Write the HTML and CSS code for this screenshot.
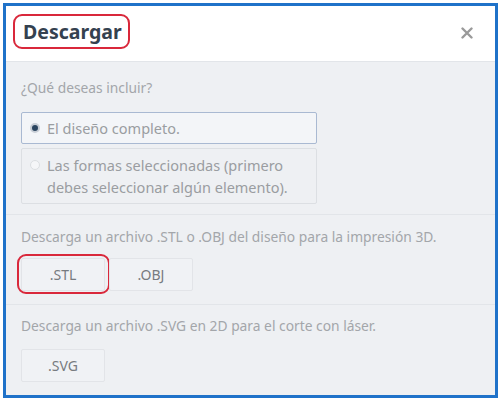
FILE: index.html
```html
<!DOCTYPE html>
<html lang="es">
<head>
<meta charset="utf-8">
<link rel="stylesheet" href="styles.css">
</head>
<body>
<div class="frame">
  <div class="header">
    <h1 class="title">Descargar</h1>
    <svg class="close" width="12" height="12" viewBox="0 0 12 12"><path d="M1.5 1.5L10.5 10.5M10.5 1.5L1.5 10.5" stroke="#9a9a9a" stroke-width="2.4" stroke-linecap="round"/></svg>
  </div>
  <div class="section s1">
    <p class="label">¿Qué deseas incluir?</p>
    <div class="options">
      <div class="option selected"><span class="radio on"></span><span>El diseño completo.</span></div>
      <div class="option"><span class="radio"></span><span>Las formas seleccionadas (primero<br>debes seleccionar algún elemento).</span></div>
    </div>
  </div>
  <div class="section s2">
    <p class="label">Descarga un archivo .STL o .OBJ del diseño para la impresión 3D.</p>
    <div class="buttons">
      <div class="btn highlight">.STL</div>
      <div class="btn">.OBJ</div>
    </div>
  </div>
  <div class="section s3">
    <p class="label">Descarga un archivo .SVG en 2D para el corte con láser.</p>
    <div class="buttons">
      <div class="btn">.SVG</div>
    </div>
  </div>
</div>
</body>
</html>
```
FILE: styles.css
```css
html, body { margin: 0; padding: 0; background: #fff; }
body { font-family: "Noto Sans", "Open Sans", sans-serif; }
.frame {
  margin: 3px 2px 0 3px;
  height: 389px;
  border: 3px solid #1f72c9;
  background: #eef0f3;
  display: flex;
  flex-direction: column;
}
.header {
  height: 55px;
  background: #fff;
  border-bottom: 1px solid #e2e5e9;
  display: flex;
  align-items: flex-start;
  justify-content: space-between;
  padding: 0 22px 0 7px;
}
.title {
  margin: 8px 0 0 0;
  border: 2px solid #d9283b;
  border-radius: 9px;
  padding: 0 6px 0 8px;
  height: 31px;
  line-height: 31px;
  font-size: 19.5px;
  font-weight: 700;
  color: #34414f;
}
.close { margin-top: 21px; }
.section { padding: 0 17px 0 15px; border-bottom: 1px solid #e2e5e9; }
.s1 { padding-top: 16px; height: 136px; }
.s2 { padding-top: 12px; height: 77px; }
.s3 { padding-top: 11px; border-bottom: none; flex: 1; }
.label {
  margin: 0;
  font-size: 13.8px;
  line-height: 19px;
  color: #a3a6aa;
}
.options { margin-top: 15px; display: flex; flex-direction: column; gap: 4px; width: 296px; }
.option {
  display: flex;
  align-items: flex-start;
  gap: 7px;
  padding: 5px 10px 5px 8px;
  border: 1px solid #dcdfe3;
  border-radius: 2px;
  font-size: 14.5px;
  line-height: 22px;
  color: #9a9da1;
}
.option.selected { border-color: #a9b9d2; background: #f3f5f8; height: 20px; line-height: 20px; }
.radio {
  flex: none;
  width: 10px;
  height: 10px;
  margin-top: 6px;
  border-radius: 50%;
  box-sizing: border-box;
  border: 1px solid #dcdfe2;
  background: #f5f6f8;
}
.option.selected .radio { margin-top: 5px; }
.radio.on { border: 2px solid #c8ced6; background: #2b4560; }
.buttons { margin-top: 12px; display: flex; gap: 4px; }
.s3 .buttons { margin-top: 14px; }
.btn {
  position: relative;
  width: 82px;
  height: 31px;
  line-height: 31px;
  text-align: center;
  border: 1px solid #e2e4e8;
  border-radius: 2px;
  background: #f0f2f5;
  font-size: 14px;
  color: #777b80;
}
.highlight::after {
  content: "";
  position: absolute;
  inset: -5px -6px -4px -5px;
  border: 2px solid #d9283b;
  border-radius: 9px;
}
```
